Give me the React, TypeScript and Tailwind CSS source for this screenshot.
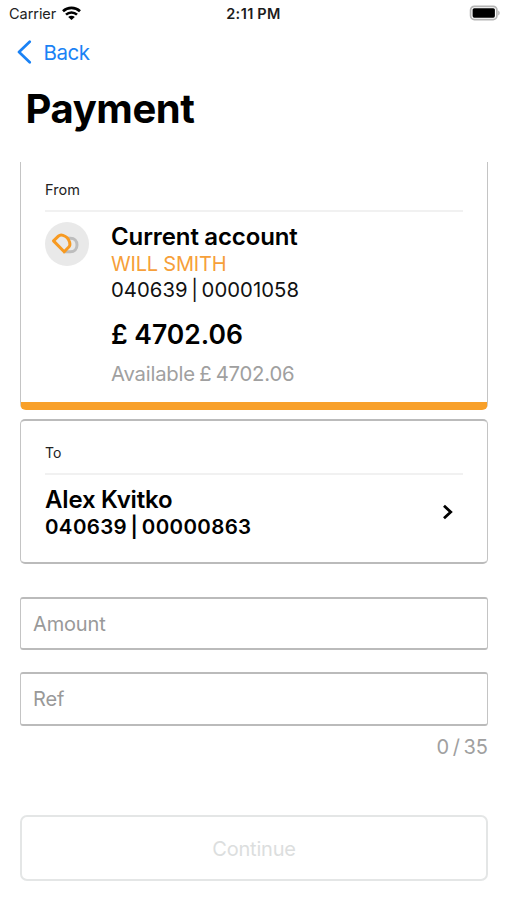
import React from "react";

function StatusBar() {
  return (
    <div className="grid h-7 grid-cols-3 items-center pl-[9px] pr-[7px]">
      <div className="flex items-center gap-[6px]">
        <span className="text-[14.5px] leading-7 tracking-[-0.05px] text-[#222]">Carrier</span>
        <svg className="mt-[-2px]" width="19" height="15" viewBox="0 0 19 15" fill="none" stroke="#000" strokeWidth="2.6">
          <path d="M1 5.2C5.7.7 13.3.7 18 5.2" />
          <path d="M4 8.6c3.1-2.9 7.9-2.9 11 0" />
          <path d="M9.5 14 6.2 10.9c1.8-1.7 4.8-1.7 6.6 0Z" fill="#000" stroke="none" />
        </svg>
      </div>
      <span className="pr-[2px] text-center text-[14.5px] leading-7 font-semibold tracking-[0.4px] [word-spacing:-0.5px] text-[#1c1c1c]">2:11 PM</span>
      <svg className="mt-[-2px] justify-self-end" width="31" height="16" viewBox="0 0 31 16">
        <rect x="1.6" y="1.3" width="26.3" height="13.3" rx="3.8" fill="#fff" stroke="#b5b5b5" strokeWidth="1.7" />
        <rect x="3.6" y="3.2" width="22.3" height="9.5" rx="1.6" fill="#000" />
        <path d="M29.2 5.5c2 .8 2 4.1 0 4.9Z" fill="#b5b5b5" />
      </svg>
    </div>
  );
}

function Logo() {
  return (
    <svg className="mt-[10px] shrink-0" width="44" height="44" viewBox="0 0 44 44" fill="none">
      <circle cx="22" cy="22" r="22" fill="#e9e9e9" />
      <path d="M20 16.2h5.5c3.8 0 6.5 2.6 6.5 6.8s-2.7 6.8-6.5 6.8H20Z" stroke="#bdbdbd" strokeWidth="3" strokeLinejoin="round" />
      <path d="M8.5 18.9 13.4 14.2C14.6 13.1 16.4 12.9 18 13.4c3.4 1.1 5.6 3.5 6.6 6.7.6 2 .3 3.8-1 5.1L19.2 29.8Z" fill="#e9e9e9" stroke="#f79a22" strokeWidth="3" strokeLinejoin="round" />
    </svg>
  );
}

export default function App() {
  return (
    <main className="flex h-[900px] w-[507px] flex-col overflow-hidden bg-white font-['Inter',sans-serif] text-black">
      <StatusBar />
      <header>
        <button className="flex h-12 items-center gap-[10.5px] pl-[17px] text-[#1a82f5]">
          <svg width="16" height="24" viewBox="0 0 16 24" fill="none" stroke="currentColor" strokeWidth="2.7" strokeLinecap="round" strokeLinejoin="round">
            <path d="M12.7 1.8 2 12l10.7 10.2" />
          </svg>
          <span className="pt-px text-[20.5px] leading-6 tracking-[-0.5px]">Back</span>
        </button>
        <h1 className="h-[86px] pl-[25.5px] text-[40px] leading-[66px] font-bold tracking-[-0.4px]">Payment</h1>
      </header>

      <section className="mr-[19px] ml-5 flex h-[248px] flex-col rounded-b-[6px] border-x border-b-8 border-x-[#c4c4c4] border-b-[#f8a02a] px-6">
        <p className="h-[48px] text-[14.5px] leading-[56px] tracking-[0.1px] text-[#222]">From</p>
        <hr className="h-[2px] border-0 bg-[#f1f1f1]" />
        <div className="flex gap-[22px]">
          <Logo />
          <div className="whitespace-nowrap pt-[10px]">
            <h2 className="text-[24px] leading-[30px] font-semibold tracking-[-0.1px] [word-spacing:-0.5px]">Current account</h2>
            <p className="text-[20px] leading-[25px] tracking-[-0.2px] text-[#f6a03a]">WILL SMITH</p>
            <p className="text-[20.3px] leading-[25px] tracking-[0.05px] [word-spacing:-2.2px] text-[#111]">040639 | 00001058</p>
            <p className="pt-4 text-[26.5px] leading-[32px] font-semibold">£ 4702.06</p>
            <p className="pt-[11px] text-[20.3px] leading-[25px] tracking-[-0.2px] [word-spacing:-1.2px] text-[#a0a0a0]">Available £ 4702.06</p>
          </div>
        </div>
      </section>

      <section className="mr-[19px] ml-5 mt-[9px] flex h-[145px] flex-col rounded-[5px] border-x border-y-2 border-x-[#c4c4c4] border-y-[#bbb] px-6">
        <p className="h-[52px] text-[14px] leading-[64px] text-[#222]">To</p>
        <hr className="h-[2px] border-0 bg-[#f1f1f1]" />
        <div className="flex items-center justify-between pt-[10px]">
          <div className="whitespace-nowrap">
            <h2 className="text-[24px] leading-[30px] font-semibold tracking-[-0.15px] [word-spacing:-0.5px]">Alex Kvitko</h2>
            <p className="mt-[-1px] text-[20.5px] leading-[25px] font-semibold tracking-[0.35px] [word-spacing:-2px]">040639 | 00000863</p>
          </div>
          <svg className="mr-[9px] mt-[-1px]" width="12" height="16" viewBox="0 0 12 16" fill="none" stroke="#000" strokeWidth="2.8">
            <path d="m2 1.8 6.7 6.2L2 14.2" />
          </svg>
        </div>
      </section>

      <div className="mr-[19px] ml-5 mt-[33px] h-[53px] rounded-[3px] border-x border-y-2 border-x-[#c4c4c4] border-y-[#bbb] px-3 text-[20px] leading-[50px] tracking-[-0.15px] text-[#999]">
        Amount
      </div>
      <div className="mr-[19px] ml-5 mt-[22px] h-[54px] rounded-[3px] border-x border-y-2 border-x-[#c4c4c4] border-y-[#bbb] px-3 text-[20px] leading-[51px] tracking-[-0.15px] text-[#999]">
        Ref
      </div>
      <p className="h-[89px] pr-[19px] text-right text-[20px] leading-[42px] [word-spacing:-2px] text-[#a0a0a0]">0 / 35</p>
      <button className="mr-[19px] ml-5 h-[66px] rounded-[7px] border-2 border-[#e4e6e6] pt-[2px] text-[20px] tracking-[-0.2px] text-[#dcdede]">Continue</button>
    </main>
  );
}
